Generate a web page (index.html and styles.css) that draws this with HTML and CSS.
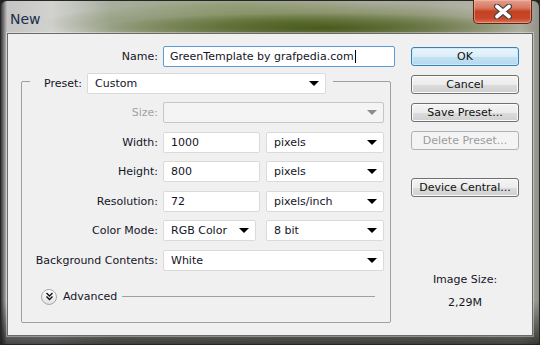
FILE: index.html
```html
<!DOCTYPE html>
<html lang="en">
<head>
    <meta charset="UTF-8">
    <title>New</title>
    <link rel="stylesheet" href="styles.css">
</head>
<body>
    <div class="window">
        <div class="titlebar">
            <span class="title">New</span>
            <button class="close" aria-label="Close">
                <svg width="22" height="15" viewBox="0 0 22 15">
                    <path d="M5 2.5 L17 12.5 M17 2.5 L5 12.5" stroke="#404040" stroke-width="6" stroke-linecap="round"/>
                    <path d="M5 2.5 L17 12.5 M17 2.5 L5 12.5" stroke="#fff" stroke-width="3.6" stroke-linecap="round"/>
                </svg>
            </button>
        </div>
        <div class="client">
            <div class="main">
                <div class="row name-row">
                    <span class="lbl name-lbl">Name:</span>
                    <div class="field text focus name-field">GreenTemplate by grafpedia.com<span class="caret"></span></div>
                </div>

                <div class="group">
                    <div class="group-head">
                        <span class="lbl">Preset:</span>
                        <div class="field select preset-field"><span>Custom</span><i class="arrow"></i></div>
                    </div>

                    <div class="rows">
                        <div class="row">
                            <span class="lbl disabled">Size:</span>
                            <div class="field select off size-field"><span></span><i class="arrow"></i></div>
                        </div>
                        <div class="row">
                            <span class="lbl">Width:</span>
                            <div class="field text num">1000</div>
                            <div class="field select unit"><span>pixels</span><i class="arrow"></i></div>
                        </div>
                        <div class="row">
                            <span class="lbl">Height:</span>
                            <div class="field text num">800</div>
                            <div class="field select unit"><span>pixels</span><i class="arrow"></i></div>
                        </div>
                        <div class="row">
                            <span class="lbl">Resolution:</span>
                            <div class="field text num">72</div>
                            <div class="field select unit"><span>pixels/inch</span><i class="arrow"></i></div>
                        </div>
                        <div class="row">
                            <span class="lbl">Color Mode:</span>
                            <div class="field select mode"><span>RGB Color</span><i class="arrow"></i></div>
                            <div class="field select unit bits"><span>8 bit</span><i class="arrow"></i></div>
                        </div>
                        <div class="row">
                            <span class="lbl">Background Contents:</span>
                            <div class="field select size-field"><span>White</span><i class="arrow"></i></div>
                        </div>
                    </div>

                    <div class="advanced">
                        <span class="toggle">
                            <svg width="9" height="9" viewBox="0 0 9 9">
                                <path d="M1.5 1 L4.5 4 L7.5 1 M1.5 4.5 L4.5 7.5 L7.5 4.5" fill="none" stroke="#111" stroke-width="1.4"/>
                            </svg>
                        </span>
                        <span class="adv-text">Advanced</span>
                        <span class="adv-line"></span>
                    </div>
                </div>
            </div>

            <div class="side">
                <button class="btn default">OK</button>
                <button class="btn">Cancel</button>
                <button class="btn">Save Preset...</button>
                <button class="btn" disabled>Delete Preset...</button>
                <button class="btn device">Device Central...</button>
                <div class="info">
                    <div>Image Size:</div>
                    <div>2,29M</div>
                </div>
            </div>
        </div>
    </div>
</body>
</html>
```

FILE: styles.css
```css
body {
    margin: 0;
    width: 540px;
    height: 345px;
    overflow: hidden;
    background: #222;
    font-family: "DejaVu Sans", Tahoma, sans-serif;
}
.window {
    width: 540px;
    height: 345px;
    box-sizing: border-box;
    border: 1px solid #262626;
    border-radius: 7px 7px 3px 3px;
    background:
        radial-gradient(ellipse 220px 15px at 320px 27px, rgba(70, 88, 28, 0.95), rgba(70, 88, 28, 0) 100%),
        radial-gradient(ellipse 250px 22px at 290px 22px, rgba(105, 122, 55, 0.9), rgba(105, 122, 55, 0) 100%),
        radial-gradient(ellipse 140px 10px at 230px 4px, rgba(150, 160, 120, 0.8), rgba(150, 160, 120, 0) 100%),
        linear-gradient(to bottom, rgba(0, 0, 0, 0) 0, rgba(0, 0, 0, 0) 300px, rgba(20, 20, 20, 0.75) 345px),
        linear-gradient(to right, #3a3a3a 0, #c4c4c4 6px, #d2d2d0 50px, #aab0a0 110px, #a9ab9b 420px, #b8b8ac 520px, #8c8c84 540px);
    padding: 0 6px 8px;
}
.titlebar {
    height: 32px;
    display: flex;
    align-items: flex-start;
    justify-content: space-between;
}
.title {
    margin: 10px 0 0 3px;
    font-size: 14px;
    color: #1b2e4c;
}
.close {
    width: 59px;
    height: 24px;
    margin: -1px 1px 0 0;
    padding: 0;
    border: 1px solid #5d2418;
    border-top: none;
    border-radius: 0 0 5px 5px;
    background: linear-gradient(to bottom, #e4a08f 0, #d8765f 35%, #c4421f 50%, #c9472a 80%, #d9765a 100%);
    box-shadow: inset 0 0 0 1px rgba(255, 200, 180, 0.45);
    display: flex;
    align-items: center;
    justify-content: center;
}
.client {
    height: 303px;
    box-sizing: border-box;
    border: 1px solid #6a6a6a;
    background: #f0f0f0;
    display: flex;
    box-shadow: 0 0 0 1px rgba(255, 255, 255, 0.35);
}
.main {
    padding: 12px 0 0 13px;
    width: 370px;
    flex-shrink: 0;
}
.row {
    display: flex;
    align-items: center;
    height: 21px;
}
.lbl {
    width: 136px;
    flex-shrink: 0;
    margin-right: 5px;
    text-align: right;
    font-size: 11px;
    color: #141428;
    white-space: nowrap;
}
.lbl.disabled {
    color: #a2a2a2;
}
.name-lbl {
    width: 137px;
}
.field {
    height: 21px;
    flex-shrink: 0;
    box-sizing: border-box;
    background: #fff;
    border: 1px solid #dadada;
    border-radius: 2px;
    font-size: 11px;
    color: #141428;
    display: flex;
    align-items: center;
    padding: 0 6px 0 7px;
    white-space: nowrap;
}
.field.focus {
    border-color: #5b9bd5;
}
.name-field {
    width: 232px;
    padding-left: 6px;
}
.caret {
    width: 1px;
    height: 13px;
    background: #000;
    margin-left: 1px;
}
.select {
    justify-content: space-between;
}
.arrow {
    width: 0;
    height: 0;
    border-left: 5px solid transparent;
    border-right: 5px solid transparent;
    border-top: 5px solid #000;
}
.select.off {
    background: #f4f4f4;
    border-color: #c4c6c8;
}
.select.off .arrow {
    border-top-color: #8c8c8c;
}
.group {
    margin-top: 14px;
    width: 370px;
    height: 242px;
    box-sizing: border-box;
    border: 1px solid #a0a0a0;
    border-radius: 2px;
}
.group-head {
    display: flex;
    align-items: center;
    width: 303px;
    box-sizing: border-box;
    margin: -9px 0 0 8px;
    padding: 0 7px 0 13px;
    background: #f0f0f0;
}
.group-head .lbl {
    width: 39px;
}
.preset-field {
    width: 239px;
}
.rows {
    display: flex;
    flex-direction: column;
    gap: 8.5px;
    margin-top: 8px;
}
.size-field {
    width: 221px;
}
.num {
    width: 97px;
    margin-right: 6px;
}
.unit {
    width: 118px;
}
.mode {
    width: 93px;
    margin-right: 10px;
}
.advanced {
    display: flex;
    align-items: center;
    margin: 18px 0 0 19px;
}
.toggle {
    width: 16px;
    height: 16px;
    box-sizing: border-box;
    border: 1px solid #a8a8a8;
    border-radius: 50%;
    background: linear-gradient(#ffffff, #e2e2e2);
    display: flex;
    align-items: center;
    justify-content: center;
}
.adv-text {
    margin-left: 6px;
    font-size: 11px;
    color: #141428;
}
.adv-line {
    width: 253px;
    height: 1px;
    margin-left: 5px;
    background: #a0a0a0;
}
.side {
    margin-left: 20px;
    padding-top: 13px;
    width: 108px;
    display: flex;
    flex-direction: column;
    gap: 9px;
}
.btn {
    height: 19px;
    box-sizing: border-box;
    padding: 0;
    border: 1px solid #707070;
    border-radius: 3px;
    background: linear-gradient(to bottom, #f4f4f4 0, #ececec 50%, #dcdcdc 51%, #d0d0d0 100%);
    box-shadow: inset 0 0 0 1px #fbfbfb;
    font-family: "DejaVu Sans", Tahoma, sans-serif;
    font-size: 11px;
    color: #111;
}
.btn.default {
    border-color: #3c7fb1;
    background: linear-gradient(to bottom, #eaf5fc 0, #dcedf8 50%, #c3e2f4 51%, #b4d8ee 100%);
    box-shadow: inset 0 0 0 1px #c8ecff;
}
.btn:disabled {
    color: #9c9c9c;
    border-color: #adb2b5;
    background: #f4f4f4;
    box-shadow: none;
}
.btn.device {
    margin-top: 19px;
}
.info {
    margin-top: 62px;
    text-align: center;
    font-size: 11px;
    color: #141428;
    line-height: 23px;
}
```
